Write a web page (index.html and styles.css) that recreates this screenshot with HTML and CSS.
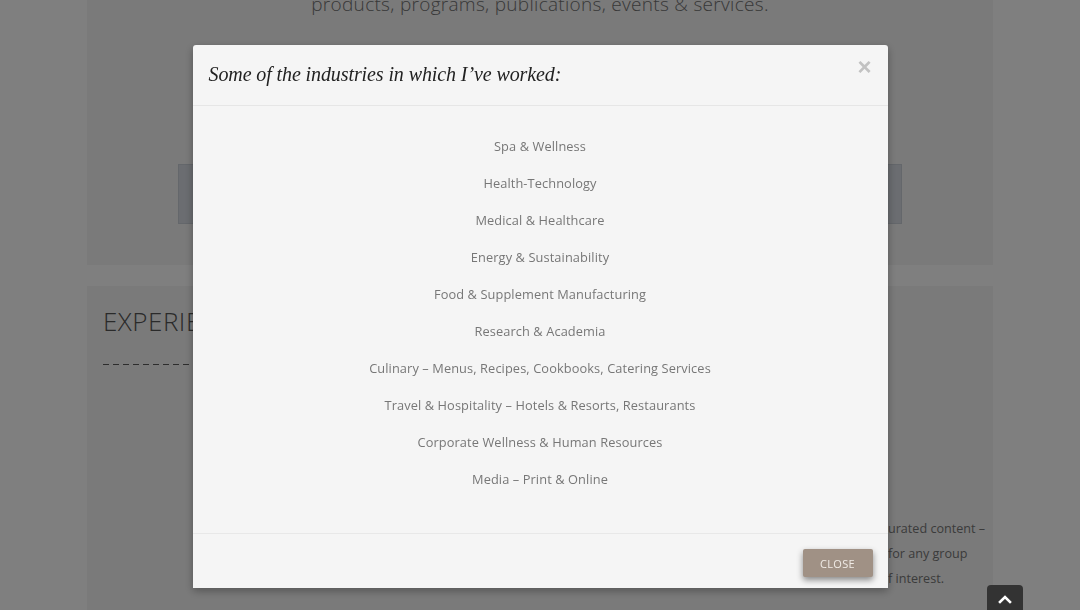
FILE: index.html
```html
<!DOCTYPE html>
<html lang="en">
<head>
<meta charset="utf-8">
<title>Industries</title>
<link rel="stylesheet" href="styles.css">
</head>
<body>
<div class="page">
  <section class="intro">
    <p class="intro-text">products, programs, publications, events &amp; services.</p>
    <div class="intro-btn"></div>
  </section>
  <div class="spacer"></div>
  <section class="experience">
    <div class="exp-left">
      <h2 class="exp-title">EXPERIENCE</h2>
      <div class="dash"></div>
    </div>
    <div class="exp-right">
      <span class="pre">Presentations &amp; c</span><span class="vis">urated content –</span>
      <span class="pre">customized </span><span class="vis">for any group</span>
      <span class="pre">or area o</span><span class="vis">f interest.</span>
    </div>
  </section>
</div>

<div class="overlay">
  <div class="modal">
    <div class="modal-header">
      <h3 class="modal-title">Some of the industries in which I’ve worked:</h3>
      <span class="modal-x">×</span>
    </div>
    <div class="modal-body">
      <p class="item">Spa &amp; Wellness</p>
      <p class="item">Health-Technology</p>
      <p class="item">Medical &amp; Healthcare</p>
      <p class="item">Energy &amp; Sustainability</p>
      <p class="item">Food &amp; Supplement Manufacturing</p>
      <p class="item">Research &amp; Academia</p>
      <p class="item">Culinary – Menus, Recipes, Cookbooks, Catering Services</p>
      <p class="item">Travel &amp; Hospitality – Hotels &amp; Resorts, Restaurants</p>
      <p class="item">Corporate Wellness &amp; Human Resources</p>
      <p class="item">Media – Print &amp; Online</p>
    </div>
    <div class="modal-footer">
      <button class="close-btn">CLOSE</button>
    </div>
  </div>
</div>

<a class="to-top" href="#">
  <svg width="14" height="10" viewBox="0 0 14 10"><path d="M2 8 L7 3 L12 8" fill="none" stroke="#fff" stroke-width="2.6" stroke-linecap="square"/></svg>
</a>
</body>
</html>
```
FILE: styles.css
```css
html, body {
  margin: 0;
  padding: 0;
  height: 100%;
  overflow: hidden;
}
body {
  background: #fefefe;
  font-family: "Open Sans", "Liberation Sans", sans-serif;
}
.page {
  width: 906px;
  margin: 0 auto;
}
.intro {
  height: 265px;
  background: #f4f4f4;
  display: flex;
  flex-direction: column;
  align-items: center;
}
.intro-text {
  margin: -11px 0 0;
  font-size: 19px;
  font-weight: 300;
  line-height: 30px;
  color: #707070;
  letter-spacing: 0.3px;
}
.intro-btn {
  margin-top: 145px;
  width: 722px;
  height: 58px;
  background: #d6dbe2;
  border: 1px solid #c8ced6;
}
.spacer {
  height: 21px;
  background: #fff;
}
.experience {
  height: 340px;
  background: #f4f4f4;
  display: flex;
  justify-content: space-between;
}
.exp-left {
  padding: 18px 0 0 16px;
}
.exp-title {
  margin: 0;
  font-weight: 300;
  font-size: 26px;
  line-height: 34px;
  color: #555;
  letter-spacing: 0.5px;
}
.dash {
  margin-top: 26px;
  width: 300px;
  height: 1px;
  background: repeating-linear-gradient(to right, #5a5a5a 0 6px, transparent 6px 10px);
}
.exp-right {
  width: 305px;
  padding-top: 230px;
  display: grid;
  grid-template-columns: 200px 105px;
  align-content: start;
  font-size: 12.6px;
  font-weight: 400;
  line-height: 25px;
  color: #777;
  white-space: nowrap;
}
.pre {
  text-align: right;
}
.vis {
  text-align: left;
}

.overlay {
  position: fixed;
  inset: 0;
  background: rgba(0, 0, 0, 0.5);
  display: flex;
  justify-content: center;
  align-items: flex-start;
  padding-top: 45px;
}
.modal {
  width: 695px;
  height: 543px;
  background: #f5f5f5;
  border-radius: 3px 3px 0 0;
  box-shadow: 0 3px 9px rgba(0, 0, 0, 0.3);
  display: flex;
  flex-direction: column;
}
.modal-header {
  height: 61px;
  box-sizing: border-box;
  border-bottom: 1px solid #e6e6e6;
  display: flex;
  align-items: center;
  justify-content: space-between;
  padding: 0 16px;
}
.modal-title {
  margin: 0;
  font-family: "Liberation Serif", "DejaVu Serif", serif;
  font-style: italic;
  font-weight: 400;
  font-size: 20px;
  color: #222;
  letter-spacing: -0.1px;
  margin-top: -2px;
}
.modal-x {
  font-family: "Liberation Sans", sans-serif;
  font-weight: 700;
  font-size: 24px;
  line-height: 20px;
  color: #c2c2c2;
  margin-top: -17px;
}
.modal-body {
  flex: 1;
  padding: 22px 16px 0;
  text-align: center;
}
.item {
  margin: 0;
  font-size: 12.8px;
  line-height: 37px;
  color: #777;
  letter-spacing: 0.1px;
}
.modal-footer {
  height: 55px;
  box-sizing: border-box;
  border-top: 1px solid #e8e8e8;
  display: flex;
  justify-content: flex-end;
  align-items: flex-start;
  padding: 15px 15px 0;
}
.close-btn {
  width: 70px;
  height: 28px;
  border: none;
  border-radius: 2px;
  background: #a09185;
  color: #f0ebe6;
  font-family: "Open Sans", sans-serif;
  font-size: 11px;
  letter-spacing: 0.3px;
  box-shadow: 0 3px 6px rgba(0, 0, 0, 0.45);
  padding: 0;
}
.to-top {
  position: fixed;
  left: 987px;
  top: 585px;
  width: 36px;
  height: 30px;
  background: #333;
  border-radius: 4px 4px 0 0;
  display: flex;
  justify-content: center;
  padding-top: 9px;
  box-sizing: border-box;
}
.to-top svg {
  display: block;
}
```
